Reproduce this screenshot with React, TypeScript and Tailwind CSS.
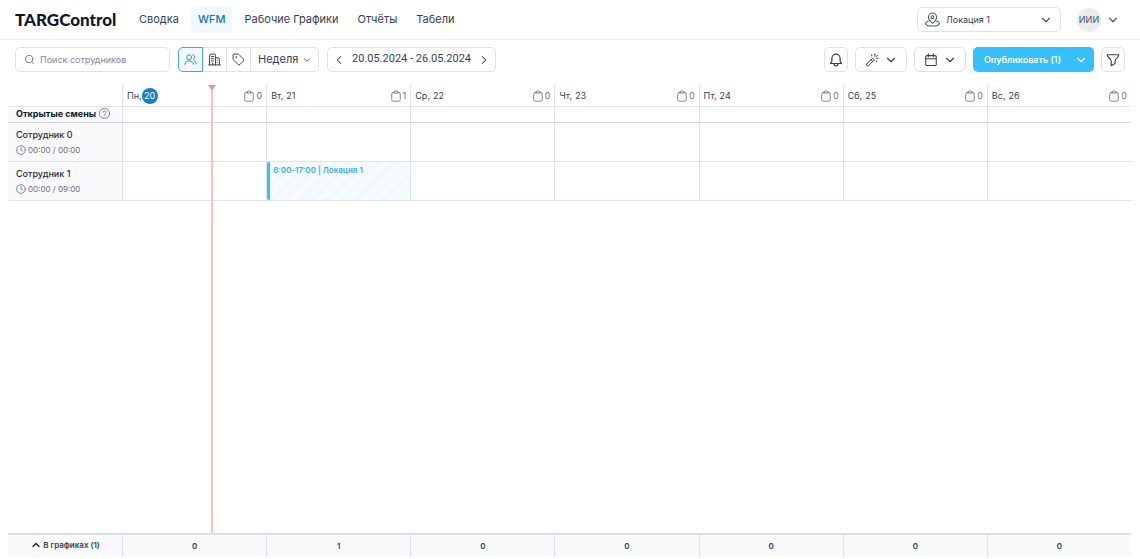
import type { ReactNode } from 'react';
import { ChevronDown, ChevronLeft, ChevronRight, ChevronUp, Search, Tag } from 'lucide-react';

const navItems = [
  { href: '#summary', label: 'Сводка' },
  { href: '#wfm', label: 'WFM', active: true },
  { href: '#schedules', label: 'Рабочие Графики' },
  { href: '#reports', label: 'Отчёты' },
  { href: '#timesheets', label: 'Табели' },
];

const days = [
  { name: 'Пн', date: 20, tasks: 0, planned: 0, today: true },
  { name: 'Вт', date: 21, tasks: 1, planned: 1 },
  { name: 'Ср', date: 22, tasks: 0, planned: 0 },
  { name: 'Чт', date: 23, tasks: 0, planned: 0 },
  { name: 'Пт', date: 24, tasks: 0, planned: 0 },
  { name: 'Сб', date: 25, tasks: 0, planned: 0 },
  { name: 'Вс', date: 26, tasks: 0, planned: 0 },
];

const employees = [
  { name: 'Сотрудник 0', hours: '00:00 / 00:00', shifts: {} as Record<number, string> },
  { name: 'Сотрудник 1', hours: '00:00 / 09:00', shifts: { 21: '8:00-17:00 | Локация 1' } as Record<number, string> },
];

const currentHour = 14.9;

function Icon({ children, className, width = 1.8 }: { children: ReactNode; className: string; width?: number }) {
  return (
    <svg
      viewBox="0 0 24 24"
      fill="none"
      stroke="currentColor"
      strokeWidth={width}
      strokeLinecap="round"
      strokeLinejoin="round"
      className={`shrink-0 ${className}`}
      aria-hidden="true"
    >
      {children}
    </svg>
  );
}

function PeopleIcon() {
  return (
    <Icon className="size-[13px]" width={1.7}>
      <circle cx="9.5" cy="8" r="4.5" />
      <path d="M1.5 21c.6-4.300 3.600-6.500 8-6.500s7.400 2.200 8 6.500" />
      <path d="M16 3.200a4.800 4.800 0 0 1 1.500 9" />
      <path d="M19 14.500c2.200 1 3.400 2.800 3.700 5.500" />
    </Icon>
  );
}

function BuildingIcon() {
  return (
    <Icon className="size-[13px]">
      <path d="M1.500 22h21M3 22V4a2 2 0 0 1 2-2h7a2 2 0 0 1 2 2v18M14 9h5a2 2 0 0 1 2 2v11" />
      <path d="M6.500 6.500h4M6.500 10.500h4M6.500 14.500h4M8.500 22v-3.500M17.500 13.500v.1M17.500 17.500v.1" />
    </Icon>
  );
}

function PinIcon() {
  return (
    <Icon className="size-[15px]" width={1.7}>
      <path d="M12 18c-2.500-2.200-6.500-5.300-6.500-9.800a6.500 6.500 0 0 1 13 0c0 4.500-4 7.600-6.500 9.800Z" />
      <circle cx="12" cy="8.200" r="2.200" />
      <path d="M5.500 14.500c-2.600.8-4.500 2-4.500 3.500 0 2.700 4.900 4.500 11 4.500s11-1.800 11-4.500c0-1.500-1.900-2.700-4.500-3.500" />
    </Icon>
  );
}

function BellIcon() {
  return (
    <Icon className="size-[14px]" width={2}>
      <path d="M12 2a7 7 0 0 0-7 7v4.500L2.500 18h19L19 13.500V9a7 7 0 0 0-7-7Z" />
      <path d="M8.500 18.500a3.500 3.500 0 0 0 7 0" />
    </Icon>
  );
}

function WandIcon() {
  return (
    <Icon className="size-[14px]" width={1.7}>
      <path d="M2.700 19.200 13 8.900l2.900 2.900L5.600 22.100c-1.900 1-3.900-1-2.900-2.900ZM10.300 11.600l2.900 2.900" />
      <path d="M11.500 3v2M17 1.500v3M21.500 4l-2 2M20 9h2.500M20 13.500v1.500M16 7l.5-.5" />
    </Icon>
  );
}

function CalendarIcon() {
  return (
    <Icon className="size-[14px]" width={1.8}>
      <rect x="3" y="4.500" width="18" height="17" rx="2" />
      <path d="M3 10h18M7.500 1.500v5M16.500 1.500v5" />
    </Icon>
  );
}

function FunnelIcon() {
  return (
    <Icon className="size-[14px]" width={1.9}>
      <path d="M2 3h20c0 3-2 4.500-4.500 7-1.800 1.800-2 2.800-2 4.500v3.500L9 22v-7.500c0-1.700-.2-2.700-2-4.500C4.500 7.500 2 6 2 3Z" />
    </Icon>
  );
}

function ClipboardIcon() {
  return (
    <Icon className="size-3" width={1.7}>
      <path d="M8 4.500H6.500a3 3 0 0 0-3 3v12a3 3 0 0 0 3 3h11a3 3 0 0 0 3-3v-12a3 3 0 0 0-3-3H16" />
      <path d="M7.500 5.500 9.500 2h5l2 3.500Z" />
    </Icon>
  );
}

function ClockIcon() {
  return (
    <Icon className="size-[10px]" width={2}>
      <circle cx="12" cy="12" r="10.500" />
      <path d="M12 5.500V12l4.500 2.500" />
    </Icon>
  );
}

function HelpIcon() {
  return (
    <Icon className="size-[11px]" width={1.8}>
      <circle cx="12" cy="12" r="11" />
      <path d="M9 9.200c0-4 6.500-3.800 6.500 0 0 2.500-3.500 2.500-3.500 5M12 17.500v.3" />
    </Icon>
  );
}

function Header() {
  return (
    <header className="flex h-10 items-center border-b border-[#eeeff2] px-[15px]">
      <a href="#home" className="w-[101px] font-['Lato',sans-serif] text-[17px] font-black text-[#101828]">
        TARGControl
      </a>
      <nav className="ml-4 flex items-center gap-[5px] text-[11px]">
        {navItems.map((item) => (
          <a
            key={item.label}
            href={item.href}
            className={`flex h-[26px] items-center rounded px-[7px] ${
              item.active ? 'bg-[#f0f9ff] font-medium text-[#1576b5]' : 'text-[#344054]'
            }`}
          >
            {item.label}
          </a>
        ))}
      </nav>
      <div className="relative ml-auto flex items-center text-[#475467]">
        <span className="pointer-events-none absolute left-2">
          <PinIcon />
        </span>
        <select
          aria-label="Локация"
          className="h-[25px] w-36 appearance-none rounded-[5px] border border-[#dfe2e8] bg-white pl-7 text-[9px] text-[#344054]"
        >
          <option>Локация 1</option>
        </select>
        <ChevronDown className="pointer-events-none absolute right-2 size-3.5" />
      </div>
      <button type="button" aria-label="Профиль" className="ml-4 flex items-center gap-[5px] pr-[5px] text-[#475467]">
        <span className="flex size-6 items-center justify-center rounded-full bg-[#e9ecf1] text-[9px]">ИИИ</span>
        <ChevronDown className="size-3.5" />
      </button>
    </header>
  );
}

const toolButton = 'flex h-[25px] items-center justify-center rounded-[5px] border border-[#dfe2e8] bg-white text-[#344054]';

function Toolbar() {
  return (
    <div className="flex h-[45px] items-start px-[15px] pt-[7px]">
      <label className="flex h-[25px] w-[155px] items-center gap-[5px] rounded-[5px] border border-[#dfe2e8] px-2 text-[#667085]">
        <Search className="size-[11px] shrink-0" />
        <input
          type="text"
          aria-label="Поиск сотрудников"
          placeholder="Поиск сотрудников"
          className="w-full min-w-0 text-[9px] outline-none placeholder:text-[#7d8596]"
        />
      </label>

      <div className="ml-2 flex h-[25px] text-[#344054]">
        <button
          type="button"
          aria-label="Сотрудники"
          className="flex w-[25px] items-center justify-center rounded-l-[5px] border border-[#4ba3db] bg-[#f0f9ff] text-[#3489c5]"
        >
          <PeopleIcon />
        </button>
        <button type="button" aria-label="Отделы" className="flex w-6 items-center justify-center border-y border-r border-[#dfe2e8]">
          <BuildingIcon />
        </button>
        <button type="button" aria-label="Метки" className="flex w-6 items-center justify-center border-y border-r border-[#dfe2e8]">
          <Tag className="size-[13px]" strokeWidth={1.8} />
        </button>
        <div className="relative flex items-center">
          <select
            aria-label="Период"
            className="h-[25px] w-[68px] appearance-none rounded-r-[5px] border-y border-r border-[#dfe2e8] bg-white pl-[7px] text-[11px]"
          >
            <option>Неделя</option>
          </select>
          <ChevronDown className="pointer-events-none absolute right-[7px] size-2.5" />
        </div>
      </div>

      <div className="ml-2 flex h-[25px] w-[169px] items-center justify-between rounded-[5px] border border-[#dfe2e8] px-1 text-[#344054]">
        <button type="button" aria-label="Предыдущая неделя">
          <ChevronLeft className="size-3.5" strokeWidth={1.8} />
        </button>
        <span className="font-['Roboto',sans-serif] text-[11px] whitespace-nowrap">20.05.2024 - 26.05.2024</span>
        <button type="button" aria-label="Следующая неделя">
          <ChevronRight className="size-3.5" strokeWidth={1.8} />
        </button>
      </div>

      <div className="ml-auto flex gap-[7px]">
        <button type="button" aria-label="Уведомления" className={`${toolButton} w-6`}>
          <BellIcon />
        </button>
        <button type="button" aria-label="Автозаполнение" className={`${toolButton} w-[52px] gap-[5px]`}>
          <WandIcon />
          <ChevronDown className="size-3.5" />
        </button>
        <button type="button" aria-label="Календарь" className={`${toolButton} w-[52px] gap-[5px]`}>
          <CalendarIcon />
          <ChevronDown className="size-3.5" />
        </button>
        <div className="flex h-[25px] w-[121px] rounded-[5px] bg-[#36bffa] text-white">
          <button type="button" className="flex-1 pl-1 text-[9px] font-semibold whitespace-nowrap">
            Опубликовать (1)
          </button>
          <button type="button" aria-label="Варианты публикации" className="flex w-[26px] items-center justify-center">
            <ChevronDown className="size-3.5" />
          </button>
        </div>
        <button type="button" aria-label="Фильтр" className={`${toolButton} w-6`}>
          <FunnelIcon />
        </button>
      </div>
    </div>
  );
}

function ScheduleTable() {
  return (
    <table className="w-full table-fixed border-separate border-spacing-0 text-[#344054]">
      <colgroup>
        <col className="w-[114px]" />
        {days.map((day) => (
          <col key={day.date} />
        ))}
      </colgroup>
      <thead>
        <tr className="h-[22px] text-[9px]">
          <td className="border-b border-[#dfe3ea] p-0" />
          {days.map((day) => (
            <th key={day.date} scope="col" className="border-b border-l border-[#dfe3ea] px-1 py-0 font-normal">
              <div className="flex h-[21px] items-center justify-between">
                <span className="flex items-center">
                  {day.name},
                  {day.today ? (
                    <span className="flex size-4 items-center justify-center rounded-full bg-[#1580c4] text-white">{day.date}</span>
                  ) : (
                    <span className="ml-[3px]">{day.date}</span>
                  )}
                </span>
                <span className="flex items-center gap-px text-[#667085]">
                  <ClipboardIcon />
                  {day.tasks}
                </span>
              </div>
            </th>
          ))}
        </tr>
      </thead>
      <tbody>
        <tr className="h-4">
          <th scope="row" className="border-b border-[#d0d5dd] bg-[#f9fafb] p-0 pl-2 text-left align-top text-[9px] font-bold text-[#101828]">
            <div className="flex h-[13px] items-center gap-[3px] whitespace-nowrap">
              Открытые смены
              <button type="button" aria-label="Справка" className="text-[#667085]">
                <HelpIcon />
              </button>
            </div>
          </th>
          {days.map((day) => (
            <td key={day.date} className="border-b border-l border-b-[#d0d5dd] border-l-[#dfe3ea] p-0" />
          ))}
        </tr>
        {employees.map((employee) => (
          <tr key={employee.name} className="h-[39px]">
            <th scope="row" className="border-b border-[#dfe3ea] bg-[#f9fafb] p-0 pl-2 text-left font-normal">
              <div className="text-[9px] leading-3 font-medium text-[#1d2939]">{employee.name}</div>
              <div className="mt-[3px] flex items-center gap-0.5 text-[8px] leading-3 text-[#667085]">
                <ClockIcon />
                {employee.hours}
              </div>
            </th>
            {days.map((day) => (
              <td key={day.date} className="border-b border-l border-[#dfe3ea] p-0">
                {employee.shifts[day.date] && (
                  <button
                    type="button"
                    className="flex h-[38px] w-full items-start rounded-l-[2px] border-l-[3px] border-[#36bffa] bg-[repeating-linear-gradient(135deg,#f9fafb_0px,#f9fafb_5px,#f0f9ff_5px,#f0f9ff_10px)] pt-0.5 pl-[3px] text-left text-[8px] leading-3 font-semibold text-[#36aeea]"
                  >
                    {employee.shifts[day.date]}
                  </button>
                )}
              </td>
            ))}
          </tr>
        ))}
      </tbody>
    </table>
  );
}

function TotalsTable() {
  return (
    <table className="w-full table-fixed border-separate border-spacing-0 border-t-2 border-[#dcdfe5] bg-[#f9fafb] text-[8px] text-[#344054]">
      <colgroup>
        <col className="w-[114px]" />
        {days.map((day) => (
          <col key={day.date} />
        ))}
      </colgroup>
      <tbody>
        <tr className="h-[22px]">
          <th scope="row" className="p-0 font-semibold">
            <button type="button" className="inline-flex items-center gap-px whitespace-nowrap">
              <ChevronUp className="size-3 text-[#101828]" strokeWidth={2.5} />
              В графиках (1)
            </button>
          </th>
          {days.map((day) => (
            <td key={day.date} className="border-l border-[#dfe3ea] p-0 text-center font-semibold">
              {day.planned}
            </td>
          ))}
        </tr>
      </tbody>
    </table>
  );
}

export default function App() {
  return (
    <div className="flex min-h-screen flex-col bg-white font-['Inter',sans-serif]">
      <Header />
      <Toolbar />
      <main className="flex flex-1 flex-col pr-[9px] pb-0.5 pl-2">
        <div className="relative flex-1">
          <ScheduleTable />
          <div className="pointer-events-none absolute inset-y-0 right-0 left-[114px]">
            <div
              className="absolute inset-y-0 w-0.5 bg-[#f8c4b8]"
              style={{ left: `${(currentHour / 24 / days.length) * 100}%` }}
            >
              <svg viewBox="0 0 8 5" className="absolute top-0 -left-[3px] h-[5px] w-2 fill-[#d0a088]">
                <path d="M0 0h8L5 4.500H3Z" />
              </svg>
            </div>
          </div>
        </div>
        <TotalsTable />
      </main>
    </div>
  );
}
